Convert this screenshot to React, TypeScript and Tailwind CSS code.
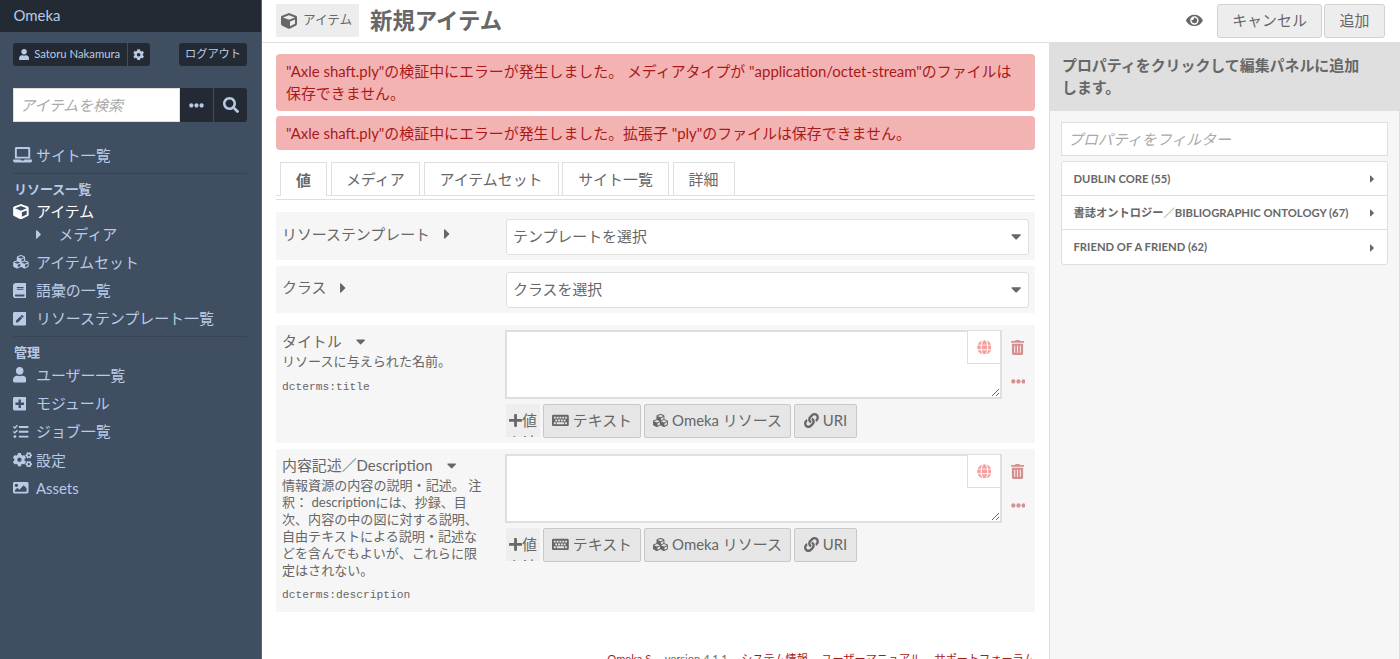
import type { ReactNode } from "react";
import type { IconType } from "react-icons";
import {
  FaBook,
  FaCaretDown,
  FaCaretRight,
  FaCog,
  FaCogs,
  FaCube,
  FaCubes,
  FaEllipsisH,
  FaEye,
  FaGlobe,
  FaImage,
  FaKeyboard,
  FaLaptop,
  FaLink,
  FaPenSquare,
  FaPlus,
  FaPlusSquare,
  FaSearch,
  FaTasks,
  FaTrashAlt,
  FaUser,
} from "react-icons/fa";

type NavItem = { label: string; icon: IconType; iconWidth: string; active?: boolean };

const resources: NavItem[] = [
  { label: "アイテムセット", icon: FaCubes, iconWidth: "w-[1.06em]" },
  { label: "語彙の一覧", icon: FaBook, iconWidth: "w-[0.9em]" },
  { label: "リソーステンプレート一覧", icon: FaPenSquare, iconWidth: "w-[0.9em]" },
];

const admin: NavItem[] = [
  { label: "ユーザー一覧", icon: FaUser, iconWidth: "w-[0.9em]" },
  { label: "モジュール", icon: FaPlusSquare, iconWidth: "w-[0.9em]" },
  { label: "ジョブ一覧", icon: FaTasks, iconWidth: "w-[1.04em]" },
  { label: "設定", icon: FaCogs, iconWidth: "w-[1.28em]" },
  { label: "Assets", icon: FaImage, iconWidth: "w-[1.04em]" },
];

const tabs = [
  { label: "値", width: "w-[47px]" },
  { label: "メディア", width: "w-[89.5px]" },
  { label: "アイテムセット", width: "w-[135px]" },
  { label: "サイト一覧", width: "w-[107px]" },
  { label: "詳細", width: "w-[62px]" },
];

const vocabularies = ["Dublin Core (55)", "書誌オントロジー／Bibliographic Ontology (67)", "Friend of a Friend (62)"];

function NavLink({ label, icon: Icon, iconWidth, active }: NavItem) {
  return (
    <a className={`flex h-[28.2px] items-center ${active ? "text-white" : ""}`}>
      <span className="flex w-[23px] shrink-0">
        <Icon className={`${iconWidth} h-[1.04em]`} />
      </span>
      {label}
    </a>
  );
}

function Sidebar() {
  return (
    <aside className="h-full w-[262px] shrink-0 border-r border-[#566681] bg-[#404e61] text-[#b9cae6]">
      <div className="flex h-8 items-center bg-[#232a33] px-[13.5px] pb-[2px]">Omeka</div>
      <div className="pt-[11px] pr-[14px] pl-[13px]">
        <div className="flex h-[23px] text-[11.3px]">
          <a className="flex w-[114px] items-center gap-[5px] rounded-l-[3px] bg-[#232a33] pl-[6px] whitespace-nowrap">
            <FaUser className="w-[0.9em]" />
            Satoru Nakamura
          </a>
          <a className="ml-px flex w-[22px] items-center justify-center rounded-r-[3px] bg-[#232a33]">
            <FaCog />
          </a>
          <a className="ml-auto flex w-[68px] items-center justify-center rounded-[3px] bg-[#232a33] text-[11.2px]">
            ログアウト
          </a>
        </div>
        <form className="mt-[22px] flex h-[34px]">
          <input
            placeholder="アイテムを検索"
            className="w-[167px] border border-[#dfdfdf] bg-white px-[6px] italic placeholder:text-[#aaa]"
          />
          <button type="button" className="flex w-[33px] items-center justify-center bg-[#232a33]">
            <FaEllipsisH />
          </button>
          <button type="button" className="ml-px flex w-[33px] items-center justify-center rounded-r-[3px] bg-[#232a33]">
            <FaSearch className="text-[16px]" />
          </button>
        </form>
        <nav className="mt-[19px]">
          <div className="h-[33px] border-b border-[#364454]">
            <NavLink label="サイト一覧" icon={FaLaptop} iconWidth="w-[1.28em]" />
          </div>
          <h4 className="mt-[5px] h-[21px] pl-px text-[13px] leading-[21px] font-bold">リソース一覧</h4>
          <div className="flex h-[23px] items-center">
            <NavLink label="アイテム" icon={FaCube} iconWidth="w-[1.06em]" active />
          </div>
          <div className="flex h-[25px] items-center pb-[3px] pl-[23px]">
            <FaCaretRight className="w-[0.375em]" />
            <span className="ml-[17px]">メディア</span>
          </div>
          <div className="h-[88.5px] border-b border-[#364454]">
            {resources.map((item) => (
              <NavLink key={item.label} {...item} />
            ))}
          </div>
          <h4 className="mt-[5px] h-[19.5px] pl-px text-[13px] leading-[21px] font-bold">管理</h4>
          {admin.map((item) => (
            <NavLink key={item.label} {...item} />
          ))}
        </nav>
      </div>
    </aside>
  );
}

function Header() {
  return (
    <header className="flex h-[43px] shrink-0 items-start border-b border-[#dfdfdf] bg-white pt-1 pr-[15px] pl-[14px]">
      <span className="flex h-[33px] w-[83px] items-center gap-[6px] bg-[#ededed] pl-[5px] text-[12.6px]">
        <FaCube className="text-[16px]" />
        アイテム
      </span>
      <h1 className="ml-[11px] text-[22.4px] leading-[33px] font-bold">新規アイテム</h1>
      <FaEye className="mt-[9px] mr-[14px] ml-auto w-[1.125em]" />
      <button type="button" className="h-[34px] w-[105px] rounded-[3px] border border-[#d1d1d1] bg-[#ededed] pb-[2px]">
        キャンセル
      </button>
      <button type="button" className="ml-[2px] h-[34px] w-[61px] rounded-[3px] border border-[#d1d1d1] bg-[#ededed] pb-[2px]">
        追加
      </button>
    </header>
  );
}

function SelectField({ label, value }: { label: string; value: string }) {
  return (
    <div className="mb-[6px] flex h-[47.6px] bg-[#f6f6f6]">
      <div className="flex h-[44px] w-[230px] items-center pl-[6px]">
        {label}
        <FaCaretRight className="ml-[14px] w-[0.375em] text-[16px]" />
      </div>
      <div className="mt-[6.5px] flex h-[36px] w-[523px] items-center justify-between rounded-[3px] border border-[#dfdfdf] bg-white pr-[7px] pb-px pl-[6px]">
        {value}
        <FaCaretDown className="w-[0.625em] text-[16.5px]" />
      </div>
    </div>
  );
}

function ValueButton({ icon, width, children }: { icon: ReactNode; width: string; children: ReactNode }) {
  return (
    <button
      type="button"
      className={`${width} flex h-[34px] items-center justify-center gap-1 rounded-[2px] border border-[#c8c8c8] bg-[#e6e6e6] pb-px whitespace-nowrap`}
    >
      {icon}
      {children}
    </button>
  );
}

type PropertyFieldProps = { label: string; description: string; term: string; height: string };

function PropertyField({ label, description, term, height }: PropertyFieldProps) {
  return (
    <div className={`${height} mb-[6px] flex bg-[#f6f6f6]`}>
      <div className="w-[229px] pt-[5px] pl-[6px]">
        <div className="flex h-[22px] items-center">
          {label}
          <FaCaretDown className="ml-[14px] w-[0.625em]" />
        </div>
        <p className="mt-px w-[204px] text-[13.07px] leading-[16.9px]">{description}</p>
        <p className="mt-[9px] font-['Liberation_Mono',monospace] text-[11.25px] leading-[16px]">{term}</p>
      </div>
      <div className="pt-[5px]">
        <div className="flex">
          <div className="relative h-[69px] w-[497px]">
            <textarea className="block h-full w-full resize border-2 border-[#dfdfdf] bg-white" />
            <span className="absolute top-px right-[1px] flex h-[33px] w-[34px] items-center justify-center border border-t-0 border-[#dfdfdf] bg-white text-[#f4a0a0]">
              <FaGlobe />
            </span>
          </div>
          <div className="flex w-[32px] flex-col items-center pt-[10px] text-[#d49090]">
            <FaTrashAlt className="w-[0.875em]" />
            <FaEllipsisH className="mt-[19px]" />
          </div>
        </div>
        <div className="mt-[5px] ml-px flex gap-[3px]">
          <div className="h-[33px] w-[34px] overflow-hidden bg-[#eee] pt-[5px] text-center leading-[22.3px]">
            <div className="flex items-center justify-center">
              <FaPlus className="w-[0.875em]" />値
            </div>
            <div>を追</div>
          </div>
          <ValueButton icon={<FaKeyboard className="w-[1.125em]" />} width="w-[98px]">
            テキスト
          </ValueButton>
          <ValueButton icon={<FaCubes />} width="w-[147px]">
            Omeka リソース
          </ValueButton>
          <ValueButton icon={<FaLink />} width="w-[63px]">
            URI
          </ValueButton>
        </div>
      </div>
    </div>
  );
}

function PropertySelector() {
  return (
    <aside className="w-[351px] shrink-0 border-x border-[#dfdfdf] bg-[#f6f6f6]">
      <h3 className="h-[68px] bg-[#dfdfdf] pt-[11px] pr-[35px] pl-[12px] leading-[22.4px] font-bold">
        プロパティをクリックして編集パネルに追加します。
      </h3>
      <div className="px-[11px] pt-[11px]">
        <input
          placeholder="プロパティをフィルター"
          className="block h-[34px] w-full border border-[#dfdfdf] bg-white px-[6px] italic placeholder:text-[#aaa]"
        />
        <ul className="mt-[5px] rounded-[3px] border border-[#dfdfdf] bg-white text-[11.25px] font-bold uppercase">
          {vocabularies.map((name) => (
            <li
              key={name}
              className="flex h-[34px] items-center justify-between border-b border-[#dfdfdf] pt-px pr-[13px] pl-[11.5px] last:border-b-0"
            >
              {name}
              <FaCaretRight className="w-[0.375em] text-[12px]" />
            </li>
          ))}
        </ul>
      </div>
    </aside>
  );
}

export default function App() {
  return (
    <div
      lang="ja"
      className="flex h-[659px] w-[1400px] overflow-hidden bg-white font-['Lato','Noto_Sans_CJK_JP',sans-serif] text-[14.93px] leading-[22.3px] text-[#676767] [&_svg]:shrink-0"
    >
      <Sidebar />
      <div className="flex min-w-0 flex-1 flex-col">
        <Header />
        <div className="flex min-h-0 flex-1">
          <main className="w-[787px] pr-[14.5px] pl-[14px]">
            <ul className="pt-[11px] text-[#a91919]">
              <li className="mb-[5px] h-[57px] rounded-[4px] bg-[#f4b3b3] pt-[6px] pl-[10px] whitespace-nowrap">
                "Axle shaft.ply"の検証中にエラーが発生しました。 メディアタイプが "application/octet-stream"のファイルは
                <br />
                保存できません。
              </li>
              <li className="h-[34px] rounded-[4px] bg-[#f4b3b3] pt-[6px] pl-[10px]">
                "Axle shaft.ply"の検証中にエラーが発生しました。拡張子 "ply"のファイルは保存できません。
              </li>
            </ul>
            <div className="mt-[12px] flex h-[34px] gap-[3.5px] border-b border-[#dfdfdf] pl-[4px]">
              {tabs.map((tab, index) => (
                <a
                  key={tab.label}
                  className={`${tab.width} flex items-center justify-center border border-b-0 border-[#dfdfdf] bg-white pt-px ${
                    index === 0 ? "h-[34px] font-bold" : "h-[33px]"
                  }`}
                >
                  {tab.label}
                </a>
              ))}
            </div>
            <div className="mt-[3px] border-t border-[#dfdfdf] pt-[12px]">
              <SelectField label="リソーステンプレート" value="テンプレートを選択" />
              <SelectField label="クラス" value="クラスを選択" />
              <div className="pt-[5.8px]">
                <PropertyField
                  label="タイトル"
                  description="リソースに与えられた名前。"
                  term="dcterms:title"
                  height="h-[118px]"
                />
                <PropertyField
                  label="内容記述／Description"
                  description="情報資源の内容の説明・記述。 注釈： descriptionには、抄録、目次、内容の中の図に対する説明、自由テキストによる説明・記述などを含んでもよいが、これらに限定はされない。"
                  term="dcterms:description"
                  height="h-[163px]"
                />
              </div>
            </div>
            <footer className="mt-[39px] flex justify-end gap-[13.5px] text-[11.15px] leading-[16px] whitespace-nowrap text-[#a91919]">
              <a>Omeka S</a>
              <span className="text-[#676767]">version 4.1.1</span>
              <a>システム情報</a>
              <a>ユーザーマニュアル</a>
              <a>サポートフォーラム</a>
            </footer>
          </main>
          <PropertySelector />
        </div>
      </div>
    </div>
  );
}
